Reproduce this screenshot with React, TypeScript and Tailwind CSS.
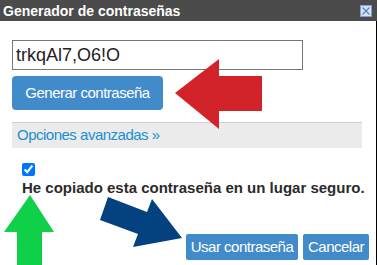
import React from "react";

const font = { fontFamily: '"Liberation Sans", Arial, sans-serif' };

function CloseIcon() {
  return (
    <svg width="12" height="12" viewBox="0 0 12 12">
      <rect x="0.5" y="0.5" width="11" height="11" fill="#d6e2f5" stroke="#7f9fd6" />
      <path d="M2.5 2.5 L9.5 9.5 M9.5 2.5 L2.5 9.5" stroke="#5a7fc4" strokeWidth="1.2" />
    </svg>
  );
}

// annotation arrows drawn over the dialog
function Arrows() {
  return (
    <svg className="pointer-events-none absolute left-0 top-0" width="377" height="265" viewBox="0 0 377 265">
      <polygon points="175,93 219,59 219,76 262,76 262,111 219,111 219,129" fill="#d2232b" />
      <polygon points="30,195 54,232 42,232 42,265 17,265 17,232 4,232" fill="#10cf48" />
      <polygon points="108,197 147,212 152,199 182,238 133,247 138,234 100,220" fill="#03427f" />
    </svg>
  );
}

export default function App() {
  return (
    <div className="relative h-[265px] w-[377px] overflow-hidden bg-white" style={font}>
      <div className="flex h-[21px] items-center justify-between bg-[#4b4b4b] pl-[3px] pr-[5px]">
        <span className="text-[14px] font-bold leading-none text-white">Generador de contraseñas</span>
        <CloseIcon />
      </div>

      <div className="h-[244px] border-r border-black pl-[12px] pr-[7px]">
        <div className="pt-[19px]">
          <div className="flex h-[30px] w-[291px] items-center border border-[#767676] pl-[3px] text-[18px] text-[#222]">
            trkqAl7,O6!O
          </div>
        </div>

        <button className="mt-[6px] h-[34px] w-[151px] rounded-[4px] bg-[#428bca] text-[15px] tracking-[-0.5px] text-white">
          Generar contraseña
        </button>

        <div className="mt-[12px] flex h-[26px] w-[350px] items-center border-t border-[#d0d0d0] bg-[#ebebeb] pl-[5px]">
          <span className="text-[15px] tracking-[-0.5px] text-[#1a8fd2]">Opciones avanzadas »</span>
        </div>

        <div className="ml-[10px] mt-[15px] flex h-[13px]">
          <input type="checkbox" defaultChecked className="m-0 h-[13px] w-[13px]" />
        </div>

        <div className="ml-[10px] mt-[3px] text-[15px] font-bold leading-[17px] text-[#2b2b2b]">
          He copiado esta contraseña en un lugar seguro.
        </div>

        <div className="mt-[38px] flex justify-end gap-[5px]">
          <button className="h-[26px] w-[112px] rounded-[2px] bg-[#428bca] text-[15px] tracking-[-0.5px] text-white">
            Usar contraseña
          </button>
          <button className="h-[26px] w-[66px] rounded-[2px] bg-[#428bca] text-[15px] tracking-[-0.5px] text-white">
            Cancelar
          </button>
        </div>
      </div>

      <Arrows />
    </div>
  );
}
